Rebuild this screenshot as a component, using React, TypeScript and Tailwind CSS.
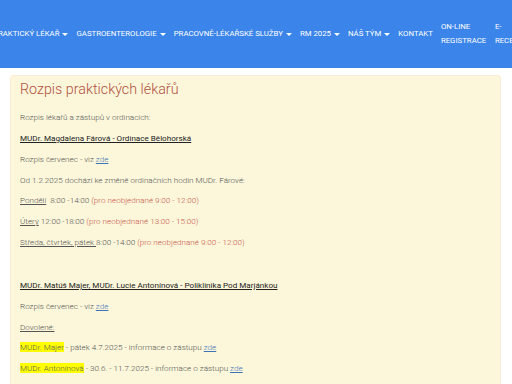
const navItems = [
  { label: 'PRAKTICKÝ LÉKAŘ', caret: true },
  { label: 'GASTROENTEROLOGIE', caret: true },
  { label: 'PRACOVNĚ-LÉKAŘSKÉ SLUŽBY', caret: true },
  { label: 'RM 2025', caret: true },
  { label: 'NÁŠ TÝM', caret: true },
  { label: 'KONTAKT', caret: false },
]

function Caret() {
  return <span className="ml-[3px] inline-block border-x-[3px] border-t-[3px] border-x-transparent border-t-white align-middle" />
}

function Zde() {
  return <a className="text-[#3f73b8] underline">zde</a>
}

function Red({ children }: { children: React.ReactNode }) {
  return <span className="text-[#c8564b]">{children}</span>
}

export default function App() {
  return (
    <div className="w-[512px] h-[384px] overflow-hidden bg-white font-['Roboto',sans-serif]">
      <nav className="h-[68px] bg-[#3a84ea] overflow-hidden flex items-center">
        <div className="flex items-center shrink-0 -ml-[11px] text-white text-[7.8px] leading-[14px]">
          {navItems.map((item) => (
            <div key={item.label} className="px-[4px] whitespace-nowrap shrink-0 flex items-center">
              {item.label}
              {item.caret && <Caret />}
            </div>
          ))}
          <div className="px-[4px] shrink-0 w-[54px]">ON-LINE REGISTRACE</div>
          <div className="px-[4px] shrink-0 w-[36px]">E-RECEPTY</div>
        </div>
      </nav>

      <div className="mt-[7px] ml-[10px] w-[491px] h-[400px] bg-[#fcf7da] rounded-[3px] border border-[#fbecd5] px-[9px] pt-[3px] text-[8.1px] font-light text-[#555] leading-[20.85px]">
        <h1 className="text-[14.3px] leading-[20px] font-light text-[#b1513f] mb-[8px]">Rozpis praktických lékařů</h1>
        <p>Rozpis lékařů a zástupů v ordinacích:</p>
        <p><span className="underline text-[#222] font-normal">MUDr. Magdalena Fárová - Ordinace Bělohorská</span></p>
        <p>Rozpis červenec - viz <Zde /></p>
        <p>Od 1.2.2025 dochází ke změně ordinačních hodin MUDr. Fárové:</p>
        <p><span className="underline">Pondělí</span>&nbsp; 8:00 -14:00 <Red>(pro neobjednané 9:00 - 12:00)</Red></p>
        <p><span className="underline">Úterý</span> 12:00 -18:00 <Red>(pro neobjednané 13:00 - 15:00)</Red></p>
        <p><span className="underline">Středa, čtvrtek, pátek </span> 8:00 -14:00 <Red>(pro neobjednané 9:00 - 12:00)</Red></p>
        <p className="h-[22px]">&nbsp;</p>
        <p><span className="underline text-[#222] font-normal">MUDr. Matúš Majer, MUDr. Lucie Antonínová - Poliklinika Pod Marjánkou</span></p>
        <p>Rozpis červenec - viz <Zde /></p>
        <p><span className="underline">Dovolené:</span></p>
        <p><span className="bg-[#ffff00]">MUDr. Majer</span> - pátek 4.7.2025 - informace o zástupu <Zde /></p>
        <p><span className="bg-[#ffff00]">MUDr. Antonínová</span> - 30.6. - 11.7.2025 - informace o zástupu <Zde /></p>
      </div>
    </div>
  )
}
